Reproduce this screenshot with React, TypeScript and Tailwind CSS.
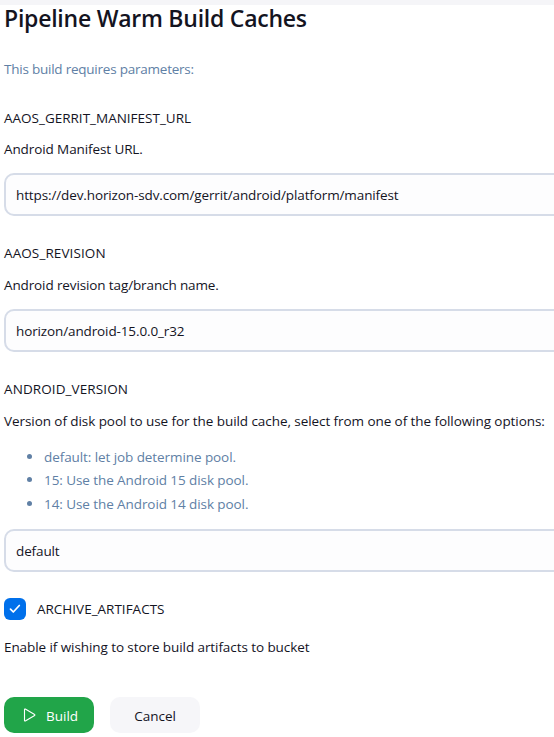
import type { ReactNode } from "react";

function Line({ className = "", children }: { className?: string; children: ReactNode }) {
  return (
    <div className="flex h-5">
      <span className={`whitespace-nowrap leading-5 ${className}`}>{children}</span>
    </div>
  );
}

function Field({ value }: { value: string }) {
  return (
    <div className="flex h-[43px] w-[600px] shrink-0 items-center rounded-[10px] border-2 border-[#d6dce8] bg-[#fdfdfe] pl-2.5">
      <span className="whitespace-nowrap leading-5 tracking-[-0.12px]">{value}</span>
    </div>
  );
}

const versions = [
  { text: "default: let job determine pool.", height: "h-[23px]" },
  { text: "15: Use the Android 15 disk pool.", height: "h-6" },
  { text: "14: Use the Android 14 disk pool.", height: "h-5" },
];

export default function App() {
  return (
    <div className="h-[737px] w-full overflow-hidden bg-white font-['Open_Sans','Noto_Sans',sans-serif] text-[13.5px] text-[#14141f]">
      <div className="h-[5px] bg-[#f5f5f8]" />
      <main className="flex flex-col pl-1">
        <h1 className="flex h-[27px] text-[23px] font-semibold leading-[26px]">
          <span className="whitespace-nowrap tracking-[-0.24px]">Pipeline Warm Build Caches</span>
        </h1>
        <div className="mt-[27px] text-[#6080a5]">
          <Line className="tracking-[-0.23px]">This build requires parameters:</Line>
        </div>

        <section className="mt-[29px]">
          <Line>AAOS_GERRIT_MANIFEST_URL</Line>
          <div className="mt-[11px]">
            <Line className="tracking-[-0.1px]">Android Manifest URL.</Line>
          </div>
          <div className="mt-[14px]">
            <Field value="https://dev.horizon-sdv.com/gerrit/android/platform/manifest" />
          </div>
        </section>

        <section className="mt-[27px]">
          <Line className="tracking-[0.1px]">AAOS_REVISION</Line>
          <div className="mt-3">
            <Line className="tracking-[-0.12px]">Android revision tag/branch name.</Line>
          </div>
          <div className="mt-[14px]">
            <Field value="horizon/android-15.0.0_r32" />
          </div>
        </section>

        <section className="mt-[27px]">
          <Line className="tracking-[0.1px]">ANDROID_VERSION</Line>
          <div className="mt-3">
            <Line className="tracking-[-0.07px]">
              Version of disk pool to use for the build cache, select from one of the following options:
            </Line>
          </div>
          <ul className="mt-4 flex flex-col text-[#6080a5]">
            {versions.map(({ text, height }) => (
              <li key={text} className={`flex pl-[23px] ${height}`}>
                <span className="mr-[12px] mt-[7px] size-[5px] rounded-full bg-[#6080a5]" />
                <Line className="tracking-[-0.08px]">{text}</Line>
              </li>
            ))}
          </ul>
          <div className="mt-[15px]">
            <Field value="default" />
          </div>
        </section>

        <section className="mt-[26px]">
          <div className="flex h-[22px] items-center">
            <span className="mr-[11px] flex size-[22px] items-center justify-center rounded-[6px] bg-[#0070eb]">
              <svg width="12" height="10" viewBox="0 0 12 10" fill="none">
                <path d="M1.5 5.2 4.3 8 10.3 1.5" stroke="white" strokeWidth="1.7" strokeLinecap="round" strokeLinejoin="round" />
              </svg>
            </span>
            <Line>ARCHIVE_ARTIFACTS</Line>
          </div>
          <div className="mt-[17px]">
            <Line className="tracking-[-0.08px]">Enable if wishing to store build artifacts to bucket</Line>
          </div>
        </section>

        <div className="mt-10 flex gap-4">
          <button className="flex h-9 w-[90px] items-center rounded-[10px] bg-[#21a549] pl-[19px] text-white">
            <svg width="14" height="14" viewBox="0 0 14 14" fill="none" className="mr-[9px]">
              <path d="M1.5 1.6v10.8c0 .5.4.7.8.5l9.3-5.4c.4-.2.4-.8 0-1L2.3 1.1c-.4-.2-.8 0-.8.5Z" stroke="white" strokeWidth="1.1" strokeLinejoin="round" />
            </svg>
            <div className="pt-0.5">
              <Line className="font-medium">Build</Line>
            </div>
          </button>
          <button className="flex h-9 w-[90px] items-center justify-center rounded-[10px] bg-[#f6f6f9] pt-0.5">
            <Line>Cancel</Line>
          </button>
        </div>
      </main>
    </div>
  );
}
